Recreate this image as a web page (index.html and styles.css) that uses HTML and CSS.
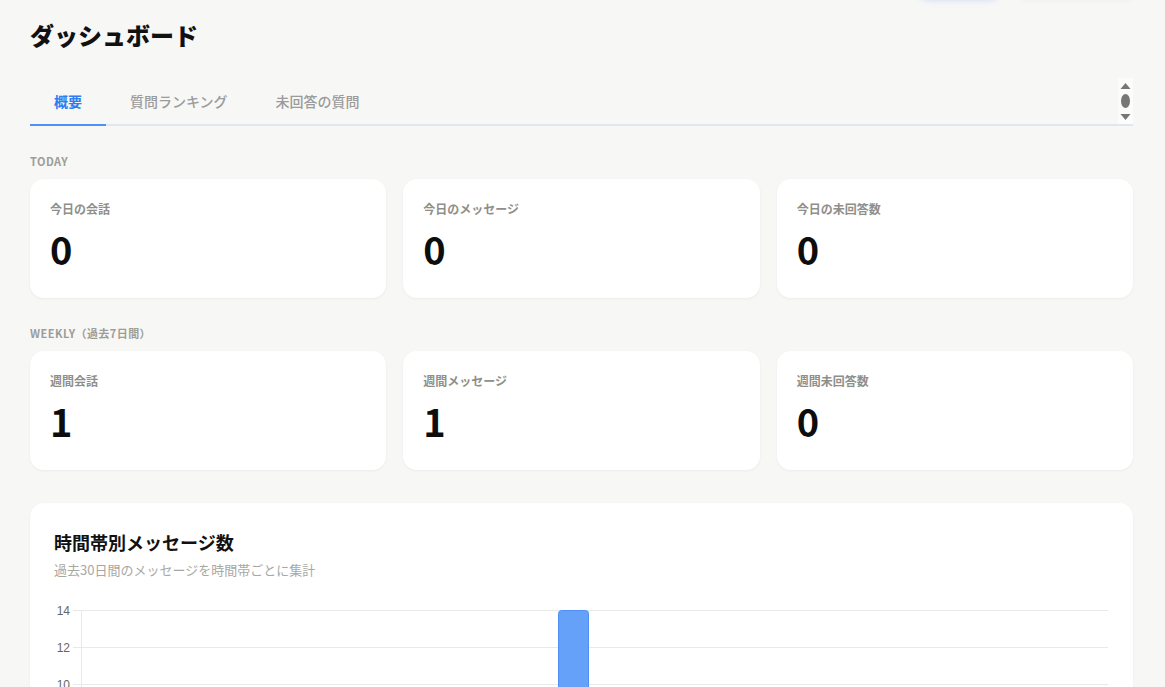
FILE: index.html
```html
<!DOCTYPE html>
<html lang="ja">
<head>
<meta charset="UTF-8">
<meta name="viewport" content="width=device-width, initial-scale=1.0">
<title>ダッシュボード</title>
<link rel="stylesheet" href="styles.css">
</head>
<body>

<div class="page">

  <!-- header actions (scrolled mostly out of view) -->
  <div class="top-actions">
    <button class="btn btn-primary" aria-label="更新"></button>
    <button class="btn btn-light" aria-label="エクスポート"></button>
  </div>

  <h1 class="page-title">ダッシュボード</h1>

  <div class="tabs">
    <div class="tab active">概要</div>
    <div class="tab">質問ランキング</div>
    <div class="tab">未回答の質問</div>
    <div class="tab-scroll">
      <svg width="15" height="46" viewBox="0 0 15 46">
        <polygon points="2.5,11 12.5,11 7.5,5" fill="#777"/>
        <ellipse cx="7.5" cy="23" rx="4.5" ry="7" fill="#777"/>
        <polygon points="2.5,36 12.5,36 7.5,42" fill="#777"/>
      </svg>
    </div>
  </div>

  <div class="section-label">TODAY</div>
  <div class="stat-grid">
    <div class="stat-card">
      <div class="stat-label">今日の会話</div>
      <div class="stat-value">0</div>
    </div>
    <div class="stat-card">
      <div class="stat-label">今日のメッセージ</div>
      <div class="stat-value">0</div>
    </div>
    <div class="stat-card">
      <div class="stat-label">今日の未回答数</div>
      <div class="stat-value">0</div>
    </div>
  </div>

  <div class="section-label">WEEKLY（過去7日間）</div>
  <div class="stat-grid">
    <div class="stat-card">
      <div class="stat-label">週間会話</div>
      <div class="stat-value">1</div>
    </div>
    <div class="stat-card">
      <div class="stat-label">週間メッセージ</div>
      <div class="stat-value">1</div>
    </div>
    <div class="stat-card">
      <div class="stat-label">週間未回答数</div>
      <div class="stat-value">0</div>
    </div>
  </div>

  <div class="chart-card">
    <h2 class="chart-title">時間帯別メッセージ数</h2>
    <p class="chart-sub">過去30日間のメッセージを時間帯ごとに集計</p>
    <svg class="chart" width="1054" height="300" viewBox="0 0 1054 300">
      <g stroke="#e9e9e9" stroke-width="1">
        <line x1="19" y1="10.5" x2="1054" y2="10.5"/>
        <line x1="19" y1="47.5" x2="1054" y2="47.5"/>
        <line x1="19" y1="84.5" x2="1054" y2="84.5"/>
        <line x1="19" y1="121.5" x2="1054" y2="121.5"/>
        <line x1="19" y1="158.5" x2="1054" y2="158.5"/>
        <line x1="19" y1="195.5" x2="1054" y2="195.5"/>
        <line x1="19" y1="232.5" x2="1054" y2="232.5"/>
        <line x1="19" y1="269.5" x2="1054" y2="269.5"/>
        <line x1="27.5" y1="10" x2="27.5" y2="275"/>
      </g>
      <g class="axis-text" text-anchor="end">
        <text x="16" y="14.5">14</text>
        <text x="16" y="51.5">12</text>
        <text x="16" y="88.5">10</text>
        <text x="16" y="125.5">8</text>
        <text x="16" y="162.5">6</text>
        <text x="16" y="199.5">4</text>
        <text x="16" y="236.5">2</text>
        <text x="16" y="273.5">0</text>
      </g>
      <path d="M504.5 269.5 V13.5 a3 3 0 0 1 3 -3 H531.5 a3 3 0 0 1 3 3 V269.5 Z" fill="#65a1f9" stroke="#4f90f7" stroke-width="1"/>
    </svg>
  </div>

</div>

</body>
</html>
```

FILE: styles.css
```css
* {
  box-sizing: border-box;
  padding: 0;
  margin: 0;
}

html, body {
  width: 100%;
  height: 100%;
  overflow: hidden;
}

body {
  background: #f7f7f5;
  color: #111;
  font-family: "Noto Sans CJK JP", "Noto Sans", sans-serif;
}

.page {
  padding: 0 32px 0 30px;
}

.top-actions {
  display: flex;
  justify-content: flex-end;
  gap: 22px;
  margin-top: -40px;
  height: 36px;
}

.btn {
  height: 36px;
  border: none;
  border-radius: 8px;
}

.btn-primary {
  width: 78px;
  background: #3b82f6;
  box-shadow: 0 2px 8px rgba(59, 130, 246, 0.35);
}

.btn-light {
  width: 113px;
  background: #fff;
  box-shadow: 0 2px 8px rgba(0, 0, 0, 0.08);
}

.page-title {
  margin-top: 23px;
  font-size: 24px;
  line-height: 32px;
  font-weight: 900;
  color: #111;
}

.tabs {
  display: flex;
  margin-top: 27px;
  border-bottom: 2px solid #e1e7f0;
}

.tab {
  height: 46px;
  padding: 0 24px;
  display: flex;
  align-items: center;
  font-size: 14px;
  font-weight: 500;
  color: #9b9b9b;
}

.tab.active {
  color: #2f7bf0;
  font-weight: 700;
  box-shadow: inset 0 -2px 0 #4d92f4;
  margin-bottom: -2px;
  height: 48px;
  padding-bottom: 2px;
}

.tab-scroll {
  margin-left: auto;
  width: 15px;
  height: 46px;
  background: #fcfcfb;
}

.tab-scroll svg {
  display: block;
}

.section-label {
  margin-top: 27px;
  font-size: 11px;
  line-height: 16px;
  font-weight: 700;
  letter-spacing: 0.04em;
  color: #9d9d97;
}

.stat-grid {
  display: grid;
  grid-template-columns: repeat(3, 1fr);
  gap: 17px;
  margin-top: 10px;
}

.stat-card {
  height: 119px;
  background: #fff;
  border-radius: 14px;
  padding: 21px 20px 0;
  box-shadow: 0 1px 3px rgba(0, 0, 0, 0.05);
}

.stat-label {
  font-size: 12px;
  line-height: 18px;
  font-weight: 700;
  color: #8f8f8a;
}

.stat-value {
  margin-top: 8px;
  font-size: 38px;
  line-height: 46px;
  font-weight: 700;
  color: #0d0d0d;
}

.chart-card {
  margin-top: 33px;
  background: #fff;
  border-radius: 14px;
  padding: 26px 24px 24px;
  box-shadow: 0 1px 3px rgba(0, 0, 0, 0.05);
}

.chart-title {
  font-size: 18px;
  line-height: 26px;
  font-weight: 700;
  color: #111;
}

.chart-sub {
  margin-top: 5px;
  font-size: 13px;
  line-height: 20px;
  color: #a8a8a3;
}

.chart {
  display: block;
  margin-top: 20px;
}

.axis-text {
  font-family: "Liberation Sans", Arial, sans-serif;
  font-size: 12px;
  fill: #666;
}
```
